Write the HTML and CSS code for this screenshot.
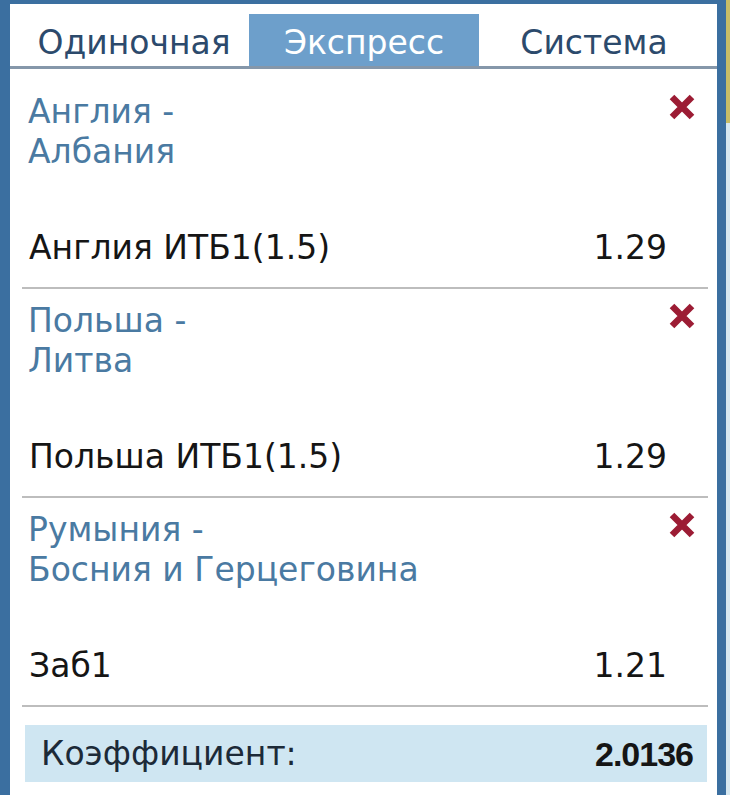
FILE: index.html
```html
<!DOCTYPE html>
<html lang="ru">
<head>
  <meta charset="UTF-8">
  <title>Купон – Экспресс</title>
  <link rel="stylesheet" href="styles.css">
</head>
<body>

  <div class="slip">

    <!-- Tabs -->
    <div class="tabs">
      <div class="tab">Одиночная</div>
      <div class="tab active">Экспресс</div>
      <div class="tab">Система</div>
    </div>

    <!-- Selected bets -->
    <div class="bets">

      <div class="bet">
        <div class="bet-head">
          <div class="match">Англия -<br>Албания</div>
          <svg class="remove" viewBox="0 0 30 30"><path d="M5 5 L25 25 M25 5 L5 25"/></svg>
        </div>
        <div class="bet-line">
          <span>Англия ИТБ1(1.5)</span>
          <span class="odds">1.29</span>
        </div>
      </div>

      <div class="bet">
        <div class="bet-head">
          <div class="match">Польша -<br>Литва</div>
          <svg class="remove" viewBox="0 0 30 30"><path d="M5 5 L25 25 M25 5 L5 25"/></svg>
        </div>
        <div class="bet-line">
          <span>Польша ИТБ1(1.5)</span>
          <span class="odds">1.29</span>
        </div>
      </div>

      <div class="bet">
        <div class="bet-head">
          <div class="match">Румыния -<br>Босния и Герцеговина</div>
          <svg class="remove" viewBox="0 0 30 30"><path d="M5 5 L25 25 M25 5 L5 25"/></svg>
        </div>
        <div class="bet-line">
          <span>Заб1</span>
          <span class="odds">1.21</span>
        </div>
      </div>

    </div>

    <!-- Total -->
    <div class="total">
      <span>Коэффициент:</span>
      <span class="total-value">2.0136</span>
    </div>

  </div>

</body>
</html>
```

FILE: styles.css
```css
body {
  margin: 0;
  font-family: "DejaVu Sans", Verdana, sans-serif;
  background: linear-gradient(to bottom, #c8bd66 0, #c8bd66 123px, #d7e8f0 123px);
  height: 795px;
  overflow: hidden;
}

.slip {
  width: 707px;
  height: 900px;
  background: white;
  border-left: 10px solid #3b6fa0;
  border-right: 9px solid #3b6fa0;
  border-top: 4px solid #3b6fa0;
}

/* tabs */
.tabs {
  display: flex;
  padding: 10px 0 0 9px;
  border-bottom: 3px solid #8597aa;
}
.tab {
  width: 230px;
  height: 52px;
  line-height: 58px;
  text-align: center;
  font-size: 33px;
  color: #2c4a6c;
}
.tab.active {
  background: #6d9fcb;
  color: white;
}

/* bets */
.bets {
  margin: 0 9px 0 12px;
  padding-top: 11px;
}
.bet {
  padding: 12px 11px 19px 6px;
  border-bottom: 2px solid #bdbdbd;
  font-size: 33px;
  line-height: 40px;
}
.bet-head {
  display: flex;
  justify-content: space-between;
  align-items: flex-start;
}
.match {
  color: #4a7aa2;
}
.remove {
  width: 30px;
  height: 30px;
  fill: none;
  stroke: #9c1c34;
  stroke-width: 6.5;
}
.bet-line {
  display: flex;
  justify-content: space-between;
  margin-top: 56px;
  padding-left: 1px;
  color: #151515;
}
.odds {
  margin-right: 30px;
}

/* total */
.total {
  display: flex;
  justify-content: space-between;
  margin: 18px 10px 0 15px;
  height: 57px;
  line-height: 58px;
  padding: 0 14px 0 16px;
  background: #cfe6f2;
  font-size: 33px;
  color: #1c2a38;
}
.total-value {
  font-family: "Liberation Sans", Arial, sans-serif;
  font-size: 34px;
  font-weight: bold;
  letter-spacing: -1px;
  color: #151515;
}
```
